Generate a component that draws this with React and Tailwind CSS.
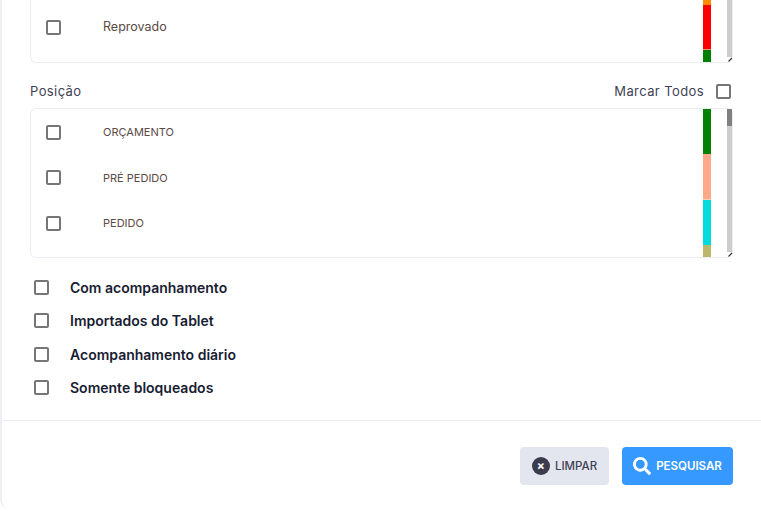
import { FaSearch } from 'react-icons/fa'

const FONT = "font-['Inter','Liberation_Sans',sans-serif]"

const POSICOES = [
  { label: 'ORÇAMENTO' },
  { label: 'PRÉ PEDIDO' },
  { label: 'PEDIDO' },
]

const OPCOES = ['Com acompanhamento', 'Importados do Tablet', 'Acompanhamento diário', 'Somente bloqueados']

function Check({ className = '' }) {
  return <span className={`block w-[15px] h-[15px] shrink-0 rounded-[2px] border-2 border-[#767676] bg-white ${className}`} />
}

function Row({ label, size = 'text-[11px]' }) {
  return (
    <div className="flex h-[45.5px] items-center">
      <Check className="ml-[15px]" />
      <span className={`ml-[42px] ${size} text-[#5b4a45]`}>{label}</span>
    </div>
  )
}

function Scrollbar({ thumb }) {
  return (
    <div className="relative w-[5px] h-full bg-[#cdcdcd]">
      {thumb && <div className="h-[17px] bg-[#808080]" />}
      <div className="absolute bottom-0 -right-px h-[5px] w-[6px] bg-white">
        <svg width="6" height="5" viewBox="0 0 6 5" className="block">
          <path d="M1.5 4.5 L5 1" stroke="#333" strokeWidth="1.2" fill="none" />
        </svg>
      </div>
    </div>
  )
}

export default function App() {
  return (
    <div className={`${FONT} w-[761px] h-[511px] overflow-hidden bg-white`}>
      <div className="h-[508px] w-full rounded-bl-lg border-l-2 border-[#eeeef7]">
        <div className="ml-[28px] mr-[28px]">
          <div className="flex h-[63px] rounded-b-md border border-t-0 border-[#ebedf3]">
            <div className="flex-1 pt-[5px]">
              <Row label="Reprovado" size="text-[12.5px]" />
            </div>
            <div className="flex w-[8px] flex-col">
              <div className="h-[5px] bg-[#ff8c00]" />
              <div className="h-[44px] bg-[#ff0000]" />
              <div className="h-px bg-[#ee8888]" />
              <div className="flex-1 bg-[#008000]" />
            </div>
            <div className="ml-[16px] h-full"><Scrollbar /></div>
          </div>

          <div className="flex h-[45px] items-center justify-between pt-[12px]">
            <span className="text-[13px] tracking-[0.4px] text-[#3f4254]">Posição</span>
            <div className="flex items-center gap-[12px] pr-[2px]">
              <span className="text-[13px] tracking-[0.4px] text-[#3f4254]">Marcar Todos</span>
              <Check />
            </div>
          </div>

          <div className="flex h-[150px] rounded-md border border-[#ebedf3]">
            <div className="flex-1 pt-[0.5px]">
              {POSICOES.map(p => <Row key={p.label} {...p} />)}
            </div>
            <div className="flex w-[8px] flex-col">
              <div className="h-[45px] bg-[#008000]" />
              <div className="h-[45px] bg-[#ffa98a]" />
              <div className="h-[1px] bg-[#ffd0b8]" />
              <div className="h-[45px] bg-[#00dbde]" />
              <div className="flex-1 bg-[#bdb76b]" />
            </div>
            <div className="ml-[16px] h-full"><Scrollbar thumb /></div>
          </div>

          <div className="mt-[13px] flex flex-col">
            {OPCOES.map(o => (
              <div key={o} className="flex h-[33.3px] items-center">
                <Check className="ml-[4px]" />
                <span className="ml-[21px] text-[14px] font-semibold text-[#181c32]">{o}</span>
              </div>
            ))}
          </div>
        </div>

        <div className="mt-[16px] flex justify-end gap-[13px] border-t border-[#ebedf3] pt-[26px] pr-[28px]">
          <button className="flex h-[38px] w-[89px] items-center justify-center gap-[5px] rounded-[4px] bg-[#e4e6ef] text-[11.5px] font-medium text-[#3f4254]">
            <span className="flex h-[18px] w-[18px] items-center justify-center rounded-full bg-[#3a3b4c] text-[12px] font-bold leading-none text-white">×</span>
            LIMPAR
          </button>
          <button className="flex h-[38px] w-[111px] items-center justify-center gap-[5px] rounded-[4px] bg-[#3699ff] text-[11.5px] font-semibold text-white">
            <FaSearch size={18} />
            PESQUISAR
          </button>
        </div>
      </div>
    </div>
  )
}
